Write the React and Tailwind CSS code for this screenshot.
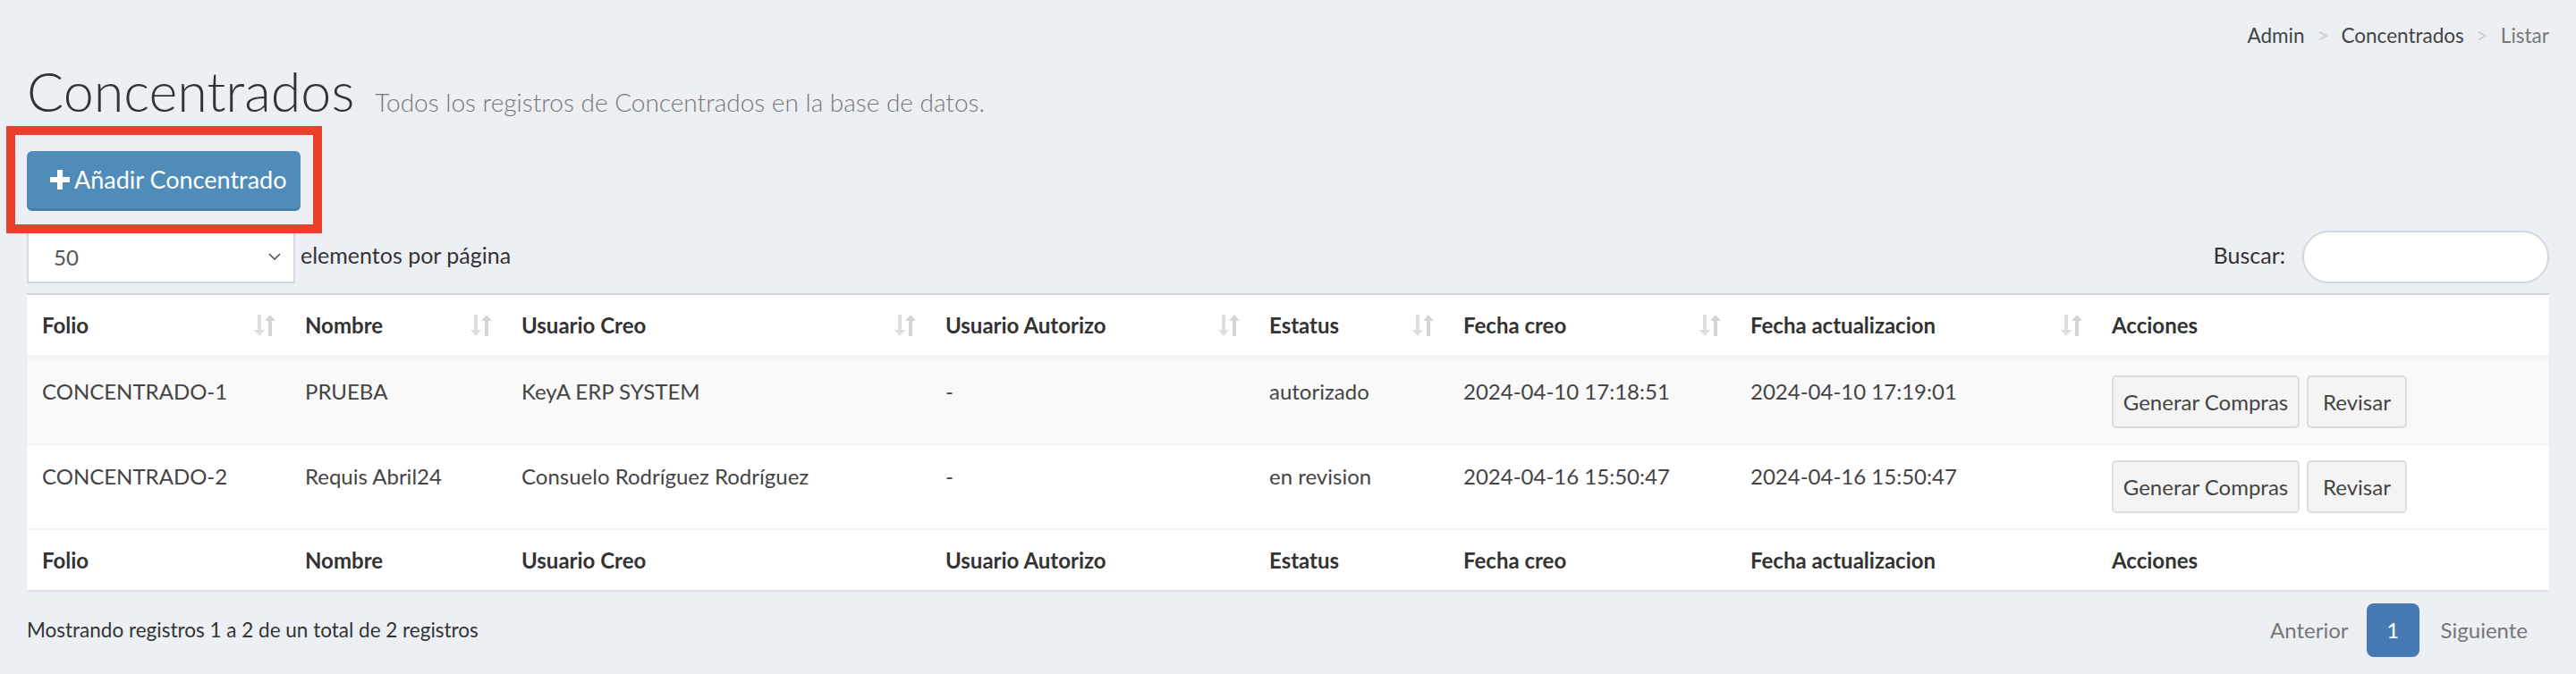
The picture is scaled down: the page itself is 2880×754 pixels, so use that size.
import React from 'react';

const font = { fontFamily: 'Lato, "Open Sans", sans-serif' };

const columns = [
    { key: 'folio', label: 'Folio', sortable: true },
    { key: 'nombre', label: 'Nombre', sortable: true },
    { key: 'creo', label: 'Usuario Creo', sortable: true },
    { key: 'autorizo', label: 'Usuario Autorizo', sortable: true },
    { key: 'estatus', label: 'Estatus', sortable: true },
    { key: 'fechaCreo', label: 'Fecha creo', sortable: true },
    { key: 'fechaAct', label: 'Fecha actualizacion', sortable: true },
    { key: 'acciones', label: 'Acciones', sortable: false },
];

const rows = [
    {
        folio: 'CONCENTRADO-1',
        nombre: 'PRUEBA',
        creo: 'KeyA ERP SYSTEM',
        autorizo: '-',
        estatus: 'autorizado',
        fechaCreo: '2024-04-10 17:18:51',
        fechaAct: '2024-04-10 17:19:01',
    },
    {
        folio: 'CONCENTRADO-2',
        nombre: 'Requis Abril24',
        creo: 'Consuelo Rodríguez Rodríguez',
        autorizo: '-',
        estatus: 'en revision',
        fechaCreo: '2024-04-16 15:50:47',
        fechaAct: '2024-04-16 15:50:47',
    },
];

const gridCols = 'grid grid-cols-[294px_242px_474px_362px_217px_321px_404px_506px]';

const SortIcon = () => (
    <svg width="24" height="26" viewBox="0 0 24 26" className="shrink-0">
        <path d="M4 1h4v17h4l-6 7-6-7h4z" fill="#dedede" />
        <path d="M16 25h4V8h4l-6-7-6 7h4z" fill="#d4d4d4" />
    </svg>
);

const PlusIcon = () => (
    <svg width="22" height="22" viewBox="0 0 22 22" className="shrink-0">
        <path d="M8 0h6v8h8v6h-8v8H8v-8H0V8h8z" fill="#ffffff" />
    </svg>
);

const App = () => {
    return (
        <div className="min-h-screen bg-[#ecf0f5] px-[30px] text-[#333]" style={font}>
            {/* breadcrumb */}
            <div className="flex justify-end items-center pt-[22px] h-[58px] text-[22.5px]">
                <span className="text-[#444]">Admin</span>
                <span className="text-[#cccccc] px-[14px]">&gt;</span>
                <span className="text-[#444]">Concentrados</span>
                <span className="text-[#cccccc] px-[14px]">&gt;</span>
                <span className="text-[#777]">Listar</span>
            </div>

            {/* title */}
            <div className="flex items-baseline gap-[23px] mt-[8px] h-[72px]">
                <h1 className="text-[61px] leading-[72px] font-light text-[#333]">Concentrados</h1>
                <span className="text-[28px] font-light text-[#777]">Todos los registros de Concentrados en la base de datos.</span>
            </div>

            {/* add button */}
            <div className="relative mt-[31px] w-fit">
                <div className="absolute left-[-23px] top-[-28px] w-[353px] h-[120px] border-[10px] border-[#e8402b] pointer-events-none"></div>
                <button className="flex items-center gap-[5px] h-[67px] w-[306px] pl-[26px] rounded-[6px] bg-[#508cb9] border-b-[3px] border-[#4a7fa9] text-white text-[27px]">
                    <PlusIcon />
                    <span>Añadir Concentrado</span>
                </button>
            </div>

            {/* length + search */}
            <div className="flex justify-between items-center mt-[22px]">
                <div className="flex items-center gap-[6px]">
                    <div className="flex items-center justify-between w-[300px] h-[58px] bg-white border-2 border-[#d2d6de] pl-[28px] pr-[14px] text-[24px] text-[#555]">
                        <span>50</span>
                        <svg width="14" height="9" viewBox="0 0 14 9">
                            <path d="M1 1l6 6 6-6" stroke="#555" strokeWidth="1.6" fill="none" />
                        </svg>
                    </div>
                    <span className="text-[25px] mb-[4px]">elementos por página</span>
                </div>
                <div className="flex items-center gap-[19px]">
                    <span className="text-[25px] mb-[4px]">Buscar:</span>
                    <div className="w-[276px] h-[59px] bg-white border-2 border-[#d2d6de] rounded-full"></div>
                </div>
            </div>

            {/* table */}
            <div className="mt-[11px] bg-white border-t-2 border-[#d2d6de] shadow-[0_2px_2px_rgba(0,0,0,0.08)]">
                <div className={`${gridCols} h-[73px] items-center border-b-[6px] border-[#f4f4f4]`}>
                    {columns.map((col) => (
                        <div key={col.key} className="flex items-center justify-between pl-[17px] pr-[16px] text-[24px] font-bold text-[#333]">
                            <span>{col.label}</span>
                            {col.sortable && <SortIcon />}
                        </div>
                    ))}
                </div>
                {rows.map((row, index) => (
                    <div
                        key={row.folio}
                        className={`${gridCols} ${index === 0 ? 'bg-[#f9f9f9]' : 'bg-white border-t-2 border-[#f4f4f4]'} text-[24px] text-[#444]`}
                    >
                        {columns.slice(0, 7).map((col) => (
                            <div key={col.key} className="pl-[17px] pt-[17px] leading-[36px]">
                                {row[col.key]}
                            </div>
                        ))}
                        <div className="flex gap-[8px] pl-[17px] py-[17px]">
                            <button className="h-[59px] w-[210px] rounded-[5px] bg-[#f4f4f4] border-2 border-[#dddddd] text-[24px] text-[#444]">
                                Generar Compras
                            </button>
                            <button className="h-[59px] w-[112px] rounded-[5px] bg-[#f4f4f4] border-2 border-[#dddddd] text-[24px] text-[#444]">
                                Revisar
                            </button>
                        </div>
                    </div>
                ))}
                <div className={`${gridCols} h-[69px] items-center border-t-2 border-[#f4f4f4]`}>
                    {columns.map((col) => (
                        <div key={col.key} className="pl-[17px] text-[24px] font-bold text-[#333]">
                            {col.label}
                        </div>
                    ))}
                </div>
            </div>

            {/* footer */}
            <div className="flex justify-between items-center mt-[15px]">
                <span className="text-[22.5px] text-[#333]">Mostrando registros 1 a 2 de un total de 2 registros</span>
                <div className="flex items-center text-[24px] text-[#777]">
                    <span className="pl-[22px] pr-[20px]">Anterior</span>
                    <span className="flex items-center justify-center w-[59px] h-[60px] rounded-[8px] bg-[#4679b2] text-white">1</span>
                    <span className="pl-[24px] pr-[24px]">Siguiente</span>
                </div>
            </div>
        </div>
    );
};

export default App;
